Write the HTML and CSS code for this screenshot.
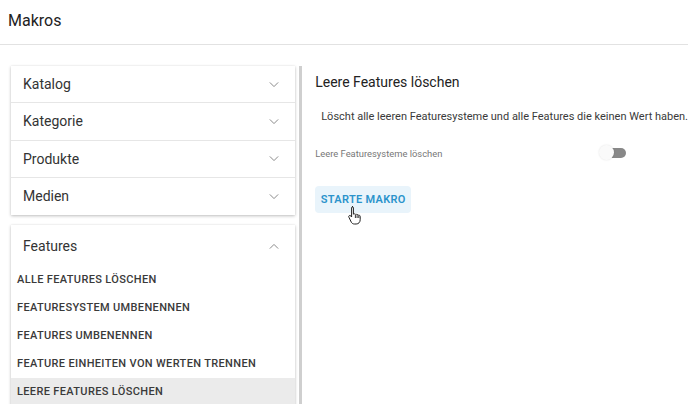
FILE: index.html
```html
<!DOCTYPE html>
<html lang="de">
<head>
<meta charset="utf-8">
<link rel="stylesheet" href="styles.css">
</head>
<body>
<header class="topbar">Makros</header>
<main class="layout">
  <aside class="sidebar">
    <section class="panel">
      <div class="panel-row"><span>Katalog</span><svg class="chev" viewBox="0 0 12 8"><path d="M1 1.5l5 5 5-5"/></svg></div>
      <div class="panel-row"><span>Kategorie</span><svg class="chev" viewBox="0 0 12 8"><path d="M1 1.5l5 5 5-5"/></svg></div>
      <div class="panel-row"><span>Produkte</span><svg class="chev" viewBox="0 0 12 8"><path d="M1 1.5l5 5 5-5"/></svg></div>
      <div class="panel-row last"><span>Medien</span><svg class="chev" viewBox="0 0 12 8"><path d="M1 1.5l5 5 5-5"/></svg></div>
    </section>
    <section class="panel open">
      <div class="panel-head"><span>Features</span><svg class="chev" viewBox="0 0 12 8"><path d="M1 6.5l5-5 5 5"/></svg></div>
      <ul class="items">
        <li>Alle Features löschen</li>
        <li>Featuresystem umbenennen</li>
        <li>Features umbenennen</li>
        <li>Feature Einheiten von Werten trennen</li>
        <li class="active">Leere Features löschen</li>
      </ul>
    </section>
  </aside>
  <div class="divider"></div>
  <section class="content">
    <h2 class="title">Leere Features löschen</h2>
    <p class="desc">Löscht alle leeren Featuresysteme und alle Features die keinen Wert haben.</p>
    <div class="option">
      <span class="label">Leere Featuresysteme löschen</span>
      <span class="switch"><span class="track"></span><span class="knob"></span></span>
    </div>
    <div class="btn-wrap">
      <button class="btn">Starte Makro</button>
      <svg class="cursor" viewBox="0 0 14 20"><path d="M4 1.5c.8 0 1.4.6 1.4 1.4v6.3l.3-.2c.6-.3 1.3-.1 1.6.4.6-.4 1.4-.2 1.7.4.6-.3 1.4-.1 1.7.5.7-.2 1.5.3 1.5 1.1v3.3c0 2.4-1.6 4.3-4 4.3H6.3c-1.2 0-2.2-.6-2.9-1.6L.9 12.2c-.4-.6-.2-1.3.4-1.6.6-.3 1.2-.1 1.6.4l.7 1V2.9c0-.8.6-1.4 1.4-1.4z" fill="#fff" stroke="#222" stroke-width="1"/><path d="M7.4 10v3M9.1 10.3v2.7M10.8 10.8v2.2" stroke="#222" stroke-width=".9" fill="none"/></svg>
    </div>
  </section>
</main>
</body>
</html>
```

FILE: styles.css
```css
* { box-sizing: border-box; }
html, body {
  margin: 0;
  padding: 0;
  background: #fff;
  font-family: Roboto, "Liberation Sans", Arial, sans-serif;
  color: #333;
  overflow: hidden;
  height: 404px;
}
.topbar {
  height: 45px;
  padding: 11px 0 0 8px;
  font-size: 16px;
  color: #222;
  border-bottom: 1px solid #e2e2e2;
}
.layout {
  display: flex;
  padding-top: 21px;
  height: 359px;
}
.sidebar {
  width: 285px;
  margin-left: 11px;
  display: flex;
  flex-direction: column;
  gap: 10px;
}
.panel {
  background: #fff;
  box-shadow: 0 1px 3px rgba(0,0,0,0.25), 0 0 1px rgba(0,0,0,0.08);
}
.panel-row, .panel-head {
  display: flex;
  align-items: center;
  justify-content: space-between;
  height: 37.25px;
  padding: 0 16px 0 12px;
  font-size: 14px;
  color: #333;
  border-bottom: 1px solid #e6e6e6;
}
.panel-row.last { border-bottom: none; }
.panel-head { border-bottom: none; height: 41px; padding-top: 1px; }
.chev {
  width: 10px;
  height: 7px;
  fill: none;
  stroke: #8a8a8a;
  stroke-width: 1.2;
}
.items {
  list-style: none;
  margin: 0;
  padding: 0;
}
.items li {
  height: 28px;
  line-height: 28px;
  padding-left: 6px;
  font-size: 11px;
  font-weight: 500;
  letter-spacing: 0.35px;
  text-transform: uppercase;
  color: #3a3a3a;
}
.items li.active { background: #ebebeb; }
.divider {
  width: 3px;
  margin-left: 4px;
  background: #cfcfcf;
  height: 338px;
}
.content {
  flex: 1;
  padding-left: 13px;
}
.title {
  margin: 6px 0 0;
  font-size: 14px;
  font-weight: 400;
  color: #222;
  line-height: 20px;
}
.desc {
  margin: 17px 0 0 6px;
  font-size: 11px;
  line-height: 16px;
  color: #3a3a3a;
  white-space: nowrap;
}
.option {
  display: flex;
  align-items: center;
  margin-top: 20px;
  width: 312px;
  justify-content: space-between;
}
.label {
  font-size: 9.4px;
  color: #777;
}
.switch {
  position: relative;
  width: 28px;
  height: 16px;
}
.track {
  position: absolute;
  left: 6px;
  top: 3px;
  width: 21px;
  height: 10px;
  border-radius: 5px;
  background: #888;
}
.knob {
  position: absolute;
  left: 0;
  top: 0;
  width: 15px;
  height: 15px;
  border-radius: 50%;
  background: #fafafa;
  box-shadow: 0 0 2px rgba(0,0,0,0.12);
}
.btn-wrap {
  position: relative;
  margin-top: 25px;
}
.btn {
  height: 27px;
  width: 96px;
  padding: 0;
  border: none;
  border-radius: 4px;
  background: #e9f4fb;
  color: #2b93cb;
  font-family: Roboto, "Liberation Sans", Arial, sans-serif;
  font-size: 11px;
  font-weight: 600;
  letter-spacing: 0.3px;
  text-transform: uppercase;
}
.cursor {
  position: absolute;
  left: 33px;
  top: 19px;
  width: 14px;
  height: 20px;
}
```
